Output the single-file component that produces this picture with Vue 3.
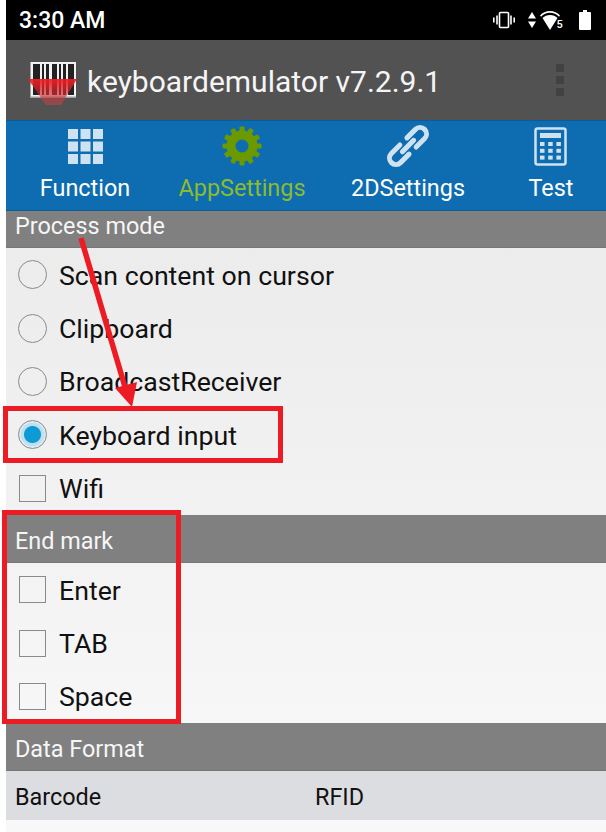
<template>
  <div class="screen">
    <div class="status-bar">
      <span class="time">3:30 AM</span>
      <div class="status-icons">
        <svg width="24" height="18" viewBox="0 0 24 18">
          <rect x="7.500" y="1.500" width="9" height="15" rx="1" fill="none" stroke="#fff" stroke-width="1.600" />
          <path d="M1 6.500h1.600v5H1zM4.200 4.500h1.600v9H4.200zM18.200 4.500h1.600v9h-1.600zM21.400 6.500H23v5h-1.600z" fill="#fff" />
        </svg>
        <svg class="data-arrows" width="10" height="18" viewBox="0 0 10 18">
          <path d="M5 1l4 6.500H1zM5 17L1 10.500h8z" fill="#fff" />
        </svg>
        <svg class="wifi" width="26" height="20" viewBox="0 0 26 20">
          <path d="M1 5.500C3.500 2.500 7 1 11 1s7.500 1.500 10 4.500l-1 1.200C17.500 4 14.500 2.800 11 2.800S4.500 4 2 6.700z" fill="#fff" />
          <path d="M3.500 8C5.500 6 8 5 11 5s5.500 1 7.500 3L11 20z" fill="#fff" />
          <text x="17.500" y="17.500" class="wifi-num">5</text>
        </svg>
        <svg class="battery" width="12" height="20" viewBox="0 0 12 20">
          <path d="M4 0h4v2h3a1 1 0 0 1 1 1v16a1 1 0 0 1-1 1H1a1 1 0 0 1-1-1V3a1 1 0 0 1 1-1h3z" fill="#fff" />
        </svg>
      </div>
    </div>

    <div class="app-bar">
      <svg class="app-logo" width="50" height="46" viewBox="0 0 50 46">
        <defs>
          <linearGradient id="beam" x1="0" y1="0" x2="0" y2="1">
            <stop offset="0" stop-color="#f01c24" stop-opacity="0.95" />
            <stop offset="0.45" stop-color="#d8242a" stop-opacity="0.7" />
            <stop offset="1" stop-color="#c04848" stop-opacity="0.55" />
          </linearGradient>
        </defs>
        <rect x="2.500" y="2" width="45.500" height="36" fill="#f2f2f2" />
        <rect x="2.500" y="36.500" width="45.500" height="1.500" fill="#a0a0a0" />
        <path d="M5 4h7v31H5zM14 4h2v31h-2zM18 4h3v31h-3zM24 4h5v31h-5zM31 4h2v31h-2zM35 4h3v31h-3zM40 4h6v31h-6z" fill="#222" />
        <path d="M0 19h49L33 45H18z" fill="url(#beam)" />
      </svg>
      <span class="app-title">keyboardemulator v7.2.9.1</span>
      <div class="overflow-menu">
        <i></i>
        <i></i>
        <i></i>
      </div>
    </div>

    <div class="tabs">
      <div v-for="tab in tabs" :key="tab.label" class="tab" :class="[tab.cls, { active: tab.active }]">
        <svg v-if="tab.icon === 'grid'" class="icon-grid" width="35" height="35" viewBox="0 0 35 35">
          <rect v-for="cell in gridCells" :key="cell.key" :x="cell.x" :y="cell.y" width="10" height="10" fill="#cfe2f1" />
        </svg>
        <svg v-else-if="tab.icon === 'gear'" class="icon-gear" width="40" height="40" viewBox="0 0 40 40">
          <circle cx="20" cy="20" r="11" fill="none" stroke="#6a9a00" stroke-width="9" />
          <rect
            v-for="a in gearTeeth"
            :key="a"
            x="17.500"
            y="0.500"
            width="5"
            height="6"
            rx="1"
            fill="#6a9a00"
            :transform="`rotate(${a} 20 20)`"
          />
        </svg>
        <svg v-else-if="tab.icon === 'link'" class="icon-link" width="44" height="44" viewBox="0 0 44 44">
          <g fill="none" stroke="#cfe2f1" stroke-width="5" stroke-linecap="round" transform="rotate(-45 22 22)">
            <path d="M17 15.500H5a6.500 6.500 0 0 0 0 13h12" />
            <path d="M27 15.500h12a6.500 6.500 0 0 1 0 13H27" />
            <path d="M14 22h16" />
          </g>
        </svg>
        <svg v-else class="icon-calc" width="34" height="40" viewBox="0 0 34 40">
          <rect x="1.500" y="1.500" width="30" height="36" rx="2" fill="none" stroke="#cfe2f1" stroke-width="2.500" />
          <rect x="6" y="6" width="21" height="5" fill="#cfe2f1" />
          <rect v-for="cell in calcCells" :key="cell.key" :x="cell.x" :y="cell.y" width="4.500" height="4" fill="#cfe2f1" />
        </svg>
        <span class="tab-label">{{ tab.label }}</span>
      </div>
    </div>

    <div class="section-head first">Process mode</div>
    <div class="list list-mode">
      <label v-for="item in modes" :key="item.label" class="row">
        <span v-if="item.type === 'radio'" class="radio" :class="{ on: item.on }"></span>
        <span v-else class="check"></span>
        <span class="row-text">{{ item.label }}</span>
      </label>
    </div>

    <div class="section-head">End mark</div>
    <div class="list list-end">
      <label v-for="label in endMarks" :key="label" class="row">
        <span class="check"></span>
        <span class="row-text">{{ label }}</span>
      </label>
    </div>

    <div class="section-head">Data Format</div>
    <div class="format-head">
      <span class="format-col">Barcode</span>
      <span>RFID</span>
    </div>

    <!-- annotations drawn on the screenshot -->
    <svg class="arrow" width="606" height="832" viewBox="0 0 606 832">
      <path d="M81 238L125 387" stroke="#ed1c24" stroke-width="5.500" fill="none" />
      <path d="M115 388L137 382L132 407z" fill="#ed1c24" />
    </svg>
    <div class="mark mark-keyboard"></div>
    <div class="mark mark-end"></div>
  </div>
</template>

<script setup>
const tabs = [
  { label: "Function", icon: "grid", cls: "tab-function" },
  { label: "AppSettings", icon: "gear", cls: "tab-app", active: true },
  { label: "2DSettings", icon: "link", cls: "tab-2d" },
  { label: "Test", icon: "calc", cls: "tab-test" },
];

const gridCells = [];
for (let r = 0; r < 3; r++) {
  for (let c = 0; c < 3; c++) {
    gridCells.push({ key: `${r}-${c}`, x: c * 12.5, y: r * 12.5 });
  }
}

const calcCells = [];
for (let r = 0; r < 3; r++) {
  for (let c = 0; c < 3; c++) {
    calcCells.push({ key: `${r}-${c}`, x: 6 + c * 8.2, y: 15 + r * 6.8 });
  }
}

const gearTeeth = [0, 30, 60, 90, 120, 150, 180, 210, 240, 270, 300, 330];

const modes = [
  { label: "Scan content on cursor", type: "radio" },
  { label: "Clipboard", type: "radio" },
  { label: "BroadcastReceiver", type: "radio" },
  { label: "Keyboard input", type: "radio", on: true },
  { label: "Wifi", type: "check" },
];

const endMarks = ["Enter", "TAB", "Space"];
</script>

<style>
html,
body {
  background: #fff;
  overflow: hidden;
}
</style>

<style scoped>
.screen {
  position: relative;
  width: 606px;
  height: 832px;
  overflow: hidden;
  padding-left: 6px;
  box-sizing: border-box;
  background: linear-gradient(#fff, #fff) 0 0 / 6px 100% no-repeat, #f8f8f8;
  font-family: Roboto, "Liberation Sans", sans-serif;
  color: #111;
}

.status-bar {
  height: 40px;
  background: #000;
  color: #fff;
  display: flex;
  align-items: center;
  justify-content: space-between;
  padding: 0 14px 0 13px;
}

.time {
  font-size: 23px;
  font-weight: 500;
}

.status-icons {
  display: flex;
  align-items: center;
}

.data-arrows {
  margin-left: 11px;
}

.wifi {
  margin-left: 2px;
}

.wifi-num {
  font-size: 11px;
  font-weight: 500;
  fill: #fff;
  font-family: Roboto, sans-serif;
}

.battery {
  margin-left: 14px;
  margin-right: 1px;
}

.app-bar {
  height: 80px;
  background: #525252;
  display: flex;
  align-items: center;
  padding-left: 22px;
  color: #f5f5f5;
}

.app-logo {
  margin-top: 6px;
  flex-shrink: 0;
}

.app-title {
  margin-left: 9px;
  padding-top: 2px;
  font-size: 30px;
}

.overflow-menu {
  margin-left: auto;
  margin-right: 42px;
  display: flex;
  flex-direction: column;
  gap: 4px;
}

.overflow-menu i {
  display: block;
  width: 8px;
  height: 8px;
  background: #414141;
}

.tabs {
  height: 91px;
  background: #0e6cb0;
  display: flex;
  color: #fff;
  border-bottom: 1px solid #0c5d97;
  box-sizing: border-box;
  box-shadow: inset 0 1px 0 #0b5c99;
}

.tab {
  display: flex;
  flex-direction: column;
  align-items: center;
  flex-shrink: 0;
  position: relative;
  height: 100%;
}

.tab svg {
  position: absolute;
}

.icon-grid {
  top: 9px;
}

.icon-gear {
  top: 6px;
}

.icon-link {
  top: 4px;
}

.icon-calc {
  top: 7px;
}

.tab-label {
  position: absolute;
  top: 54px;
  font-size: 23.400px;
  line-height: 28px;
  white-space: nowrap;
}

.tab-function {
  width: 158px;
}

.tab-app {
  width: 156px;
}

.tab-2d {
  width: 176px;
}

.tab-test {
  width: 110px;
}

.tab.active .tab-label {
  color: #8dbb2e;
}

.section-head {
  height: 48px;
  background: #808080;
  color: #f6f6f6;
  font-size: 23.400px;
  display: flex;
  align-items: center;
  padding-left: 9px;
  padding-top: 5px;
  box-sizing: border-box;
  border-bottom: 1px solid #777;
}

.section-head.first {
  height: 37px;
  padding-top: 0;
  padding-bottom: 7px;
}

.list {
  display: flex;
  flex-direction: column;
}

.list-mode {
  background: linear-gradient(#ececec, #f2f2f2);
}

.list-end {
  background: linear-gradient(#f3f3f3, #f7f7f7);
}

.row {
  height: 53.400px;
  display: flex;
  align-items: center;
  padding-left: 12px;
  font-size: 26.700px;
  gap: 12px;
}

.row-text {
  padding-top: 2px;
}

.radio {
  width: 29px;
  height: 29px;
  border-radius: 50%;
  border: 1.500px solid #8a8a8a;
  box-sizing: border-box;
  flex-shrink: 0;
}

.radio.on {
  background: radial-gradient(circle closest-side, #0e9ad4 0 8px, #bfe0f0 9px 11px, #e4eef3 13px);
}

.check {
  width: 27px;
  height: 27px;
  margin-left: 1px;
  margin-right: 1px;
  border: 1.500px solid #8a8a8a;
  box-sizing: border-box;
  flex-shrink: 0;
}

.format-head {
  height: 49px;
  background: #dcdde0;
  display: flex;
  align-items: center;
  padding-left: 9px;
  padding-top: 3px;
  box-sizing: border-box;
  font-size: 23.400px;
}

.format-col {
  width: 300px;
}

.arrow {
  position: absolute;
  top: 0;
  left: 0;
}

.mark {
  position: absolute;
  border: 5px solid #ed1c24;
  box-sizing: border-box;
}

.mark-keyboard {
  left: 3px;
  top: 406px;
  width: 280px;
  height: 57px;
}

.mark-end {
  left: 2px;
  top: 510px;
  width: 179px;
  height: 214px;
}
</style>
